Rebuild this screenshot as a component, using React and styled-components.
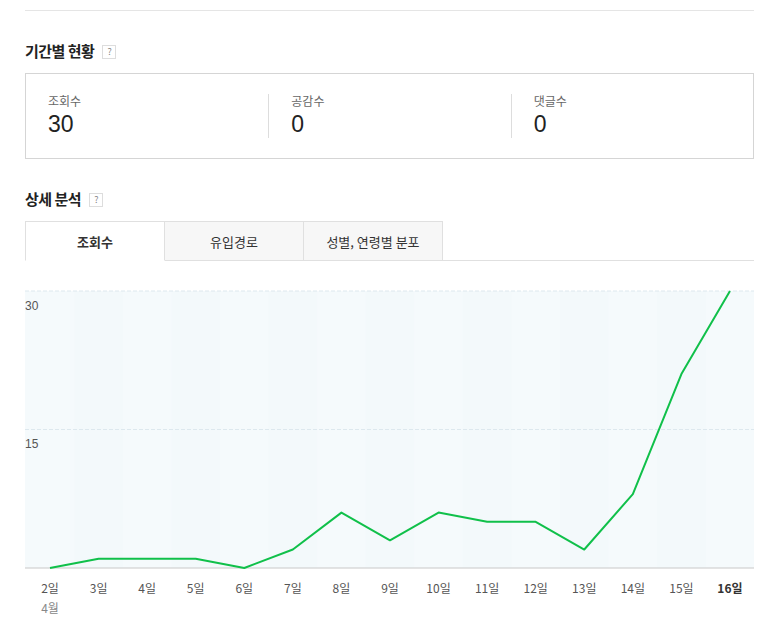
import React from 'react';
import styled, { createGlobalStyle } from 'styled-components';

const Global = createGlobalStyle`
  body {
    margin: 0;
    background: #fff;
    font-family: "Noto Sans CJK KR", "Noto Sans", sans-serif;
    color: #222;
  }
`;

const Page = styled.div`
  width: 729px;
  margin-left: 25px;
  border-top: 1px solid #e5e5e5;
  margin-top: 10px;
`;

const Heading = styled.h2`
  display: flex;
  align-items: center;
  gap: 8px;
  font-size: 15px;
  font-weight: 700;
  margin: ${p => p.$top}px 0 12px;
  letter-spacing: -0.5px;
  line-height: 20px;
`;

const Help = styled.span`
  display: inline-flex;
  align-items: center;
  justify-content: center;
  width: 12px;
  height: 12px;
  border: 1px solid #ddd;
  font-size: 9px;
  color: #888;
  font-weight: 400;
  margin-top: 2px;
`;

const Summary = styled.div`
  display: grid;
  grid-template-columns: repeat(3, 1fr);
  border: 1px solid #d5d5d5;
  height: 84px;
  align-items: center;
`;

const Stat = styled.div`
  padding-left: 22px;
  border-left: ${p => (p.$first ? 'none' : '1px solid #ddd')};
  height: 44px;
  display: flex;
  flex-direction: column;
  justify-content: center;
`;

const StatLabel = styled.div`
  font-size: 12px;
  color: #666;
  line-height: 14px;
  margin-top: 2px;
`;

const StatValue = styled.div`
  font-family: "Liberation Sans", Arial, sans-serif;
  font-size: 23px;
  line-height: 32px;
  color: #222;
`;

const Tabs = styled.div`
  display: flex;
  border-bottom: 1px solid #e0e0e0;
`;

const Tab = styled.div`
  width: 138px;
  height: 38px;
  display: flex;
  align-items: center;
  justify-content: center;
  font-size: 13px;
  font-weight: ${p => (p.$active ? 700 : 400)};
  background: ${p => (p.$active ? '#fff' : '#f7f7f7')};
  border: 1px solid #e0e0e0;
  border-left: ${p => (p.$active ? '1px solid #e0e0e0' : 'none')};
  border-bottom: ${p => (p.$active ? '1px solid #fff' : 'none')};
  margin-bottom: -1px;
  color: #333;
`;

const Chart = styled.svg`
  display: block;
  margin-top: 11px;
`;

const values = [0, 1, 1, 1, 0, 2, 6, 3, 6, 5, 5, 2, 8, 21, 30];
const W = 729;
const top = 19;
const base = 296;
const xs = i => 25 + i * 48.57;
const ys = v => base - ((base - top) * v) / 30;

const LineChart = () => {
  const pts = values.map((v, i) => `${xs(i)},${ys(v)}`).join(' ');
  return (
    <Chart width={W} height={352}>
      <rect x="0" y={top} width={W} height={base - top} fill="#f5fafc" />
      {values.map((_, i) =>
        i % 2 === 1 ? (
          <rect key={i} x={xs(i) - 24.3} y={top} width="48.6" height={base - top} fill="#f3f9fb" />
        ) : null
      )}
      <line x1="0" x2={W} y1={top} y2={top} stroke="#dde8ee" strokeDasharray="4 2" />
      <line x1="0" x2={W} y1={ys(15)} y2={ys(15)} stroke="#dde8ee" strokeDasharray="4 2" />
      <line x1="0" x2={W} y1={base} y2={base} stroke="#c8c8c8" />
      <text x="0" y="38" fontSize="12" fill="#555" fontFamily="Liberation Sans, sans-serif">30</text>
      <text x="0" y="176" fontSize="12" fill="#555" fontFamily="Liberation Sans, sans-serif">15</text>
      <polyline points={pts} fill="none" stroke="#10c04a" strokeWidth="2" strokeLinejoin="round" />
      {values.map((_, i) => (
        <text
          key={i}
          x={xs(i)}
          y="321"
          textAnchor="middle"
          fontSize="12"
          fill={i === 14 ? '#333' : '#555'}
          fontWeight={i === 14 ? 700 : 400}
        >
          {i + 2}일
        </text>
      ))}
      <text x={xs(0)} y="341" textAnchor="middle" fontSize="12" fill="#888">4월</text>
    </Chart>
  );
};

export default function App() {
  return (
    <>
      <Global />
      <Page>
        <Heading $top={30}>기간별 현황 <Help>?</Help></Heading>
        <Summary>
          <Stat $first><StatLabel>조회수</StatLabel><StatValue>30</StatValue></Stat>
          <Stat><StatLabel>공감수</StatLabel><StatValue>0</StatValue></Stat>
          <Stat><StatLabel>댓글수</StatLabel><StatValue>0</StatValue></Stat>
        </Summary>
        <Heading $top={30}>상세 분석 <Help>?</Help></Heading>
        <Tabs>
          <Tab $active>조회수</Tab>
          <Tab>유입경로</Tab>
          <Tab>성별, 연령별 분포</Tab>
        </Tabs>
        <LineChart />
      </Page>
    </>
  );
}
